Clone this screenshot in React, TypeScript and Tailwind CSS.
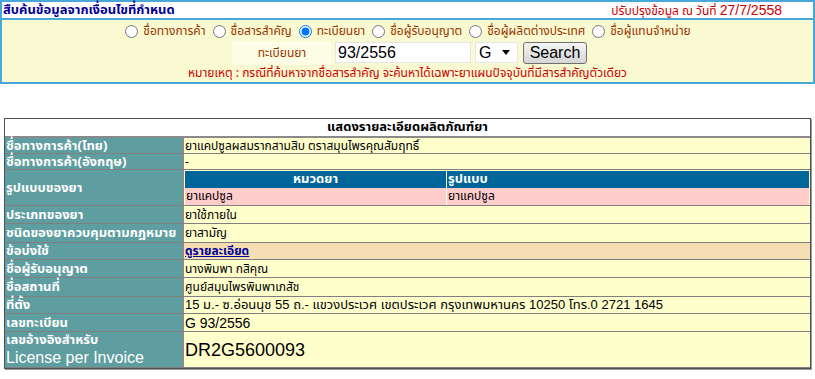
import { useState } from 'react';

// ─── Search options ──────────────────────────────────────────────────────────

const searchTypes = [
  'ชื่อทางการค้า',
  'ชื่อสารสำคัญ',
  'ทะเบียนยา',
  'ชื่อผู้รับอนุญาต',
  'ชื่อผู้ผลิตต่างประเทศ',
  'ชื่อผู้แทนจำหน่าย',
];

const font = "font-['Tahoma','Noto_Sans_Thai','Noto_Sans','Liberation_Sans',sans-serif]";
const latin = "font-['Liberation_Sans','Noto_Sans_Thai',sans-serif]";

// ─── Search panel ────────────────────────────────────────────────────────────

function SearchPanel() {
  const [type, setType] = useState(2);

  return (
    <div className="border-2 border-[#4aa8d8] h-[84px] flex flex-col">
      <div className="flex items-center justify-between h-[18px] bg-white border-b-2 border-[#4aa8d8] pl-[1px] pr-[31px]">
        <span className="text-[13px] font-bold text-[#000099]">สืบค้นข้อมูลจากเงื่อนไขที่กำหนด</span>
        <span className="text-[12px] text-[#cc0000]">
          ปรับปรุงข้อมูล ณ วันที่ <span className={`${latin} text-[14px]`}>27/7/2558</span>
        </span>
      </div>
      <div className="flex-1 bg-[#fafad2] flex flex-col items-center">
        <div className="flex items-center h-[22px] text-[12px] text-[#993300] ml-[8px]">
          {searchTypes.map((label, i) => (
            <label key={label} className="flex items-center gap-[5px] mr-[7px]">
              <input
                type="radio"
                name="type"
                checked={type === i}
                onChange={() => setType(i)}
                className="w-[13px] h-[13px] m-0"
              />
              <span>{label}</span>
            </label>
          ))}
        </div>
        <div className="flex items-center h-[21px] ml-[4px]">
          <div className="w-[100px] h-[24px] bg-[#fdfde6] flex items-center justify-center text-[12px] text-[#993300]">
            ทะเบียนยา
          </div>
          <input
            defaultValue="93/2556"
            className={`${latin} ml-[3px] w-[136px] h-[21px] bg-white border border-[#e6e6e6] px-[2px] text-[16px] text-black outline-none`}
          />
          <div className={`${latin} ml-[4px] w-[43px] h-[21px] bg-white border border-[#e6e6e6] flex items-center justify-between px-[3px] text-[16px]`}>
            <span>G</span>
            <svg width="8" height="5" viewBox="0 0 8 5" className="mr-[4px]"><path d="M0 0h8L4 5z" fill="#000" /></svg>
          </div>
          <button className={`${latin} ml-[5px] w-[64px] h-[22px] rounded-[3px] border border-[#707070] bg-gradient-to-b from-[#f4f4f4] to-[#d6d6d6] text-[16px] text-black leading-none`}>
            Search
          </button>
        </div>
        <div className="h-[19px] flex items-center text-[12px] text-[#cc0000]">
          หมายเหตุ : กรณีที่ค้นหาจากชื่อสารสำคัญ จะค้นหาได้เฉพาะยาแผนปัจจุบันที่มีสารสำคัญตัวเดียว
        </div>
      </div>
    </div>
  );
}

// ─── Detail rows ─────────────────────────────────────────────────────────────

function Row({
  label,
  h,
  children,
  valueClass,
}: {
  label: React.ReactNode;
  h: string;
  children?: React.ReactNode;
  valueClass?: string;
}) {
  return (
    <div className={`flex ${h} border-b border-[#7f7f7f]`}>
      <div className="w-[177px] shrink-0 bg-[#5f9ea0] text-white font-bold text-[13px] leading-[14px] px-[1px] flex flex-col justify-center">
        {label}
      </div>
      <div className="w-[2px] bg-[#8a8a8a]" />
      <div className={`flex-1 ${valueClass ?? 'bg-[#ffffcc] text-[12px]'} leading-[14px] text-black px-[1px] flex items-center`}>
        {children}
      </div>
    </div>
  );
}

function DetailTable() {
  return (
    <div className="ml-[4px] w-[807px] border border-[#505050] shadow-[1px_1px_0_#9a9a9a]">
      <div className="h-[19px] bg-white flex items-center justify-center font-bold text-[13px] border-b-2 border-[#8a8a8a]">
        แสดงรายละเอียดผลิตภัณฑ์ยา
      </div>
      <Row h="h-[16px]" label="ชื่อทางการค้า(ไทย)">ยาแคปซูลผสมรากสามสิบ ตราสมุนไพรคุณสัมฤทธิ์</Row>
      <Row h="h-[16px]" label="ชื่อทางการค้า(อังกฤษ)">-</Row>
      <Row h="h-[36px]" label="รูปแบบของยา" valueClass="bg-[#ffffcc]">
        <div className="w-full flex flex-col">
          <div className="flex h-[17px] bg-[#006699] text-white font-bold text-[13px] items-center">
            <div className="w-[262px] text-center border-r border-white h-full flex items-center justify-center">หมวดยา</div>
            <div className="px-[1px]">รูปแบบ</div>
          </div>
          <div className="flex h-[17px] bg-[#ffcccc] text-[12px] items-center">
            <div className="w-[262px] px-[1px] border-r border-white h-full flex items-center">ยาแคปซูล</div>
            <div className="px-[1px]">ยาแคปซูล</div>
          </div>
        </div>
      </Row>
      <Row h="h-[18px]" label="ประเภทของยา">ยาใช้ภายใน</Row>
      <Row h="h-[19px]" label="ชนิดของยาควบคุมตามกฎหมาย">ยาสามัญ</Row>
      <Row h="h-[17px]" label="ข้อบ่งใช้" valueClass="bg-[#f5deb3] text-[12px]">
        <a href="#" className="text-[#000099] font-bold underline">ดูรายละเอียด</a>
      </Row>
      <Row h="h-[18px]" label="ชื่อผู้รับอนุญาต">นางพิมพา กสิคุณ</Row>
      <Row h="h-[19px]" label="ชื่อสถานที่">ศูนย์สมุนไพรพิมพาเภสัช</Row>
      <Row h="h-[17px]" label="ที่ตั้ง" valueClass={`bg-[#ffffcc] text-[13px] ${latin}`}>
        15 ม.- ซ.อ่อนนุช 55 ถ.- แขวงประเวศ เขตประเวศ กรุงเทพมหานคร 10250 โทร.0 2721 1645
      </Row>
      <Row h="h-[18px]" label="เลขทะเบียน" valueClass={`bg-[#ffffcc] text-[14px] ${latin}`}>G 93/2556</Row>
      <Row
        h="h-[36px]"
        label={
          <>
            <div className="leading-[15px]">เลขอ้างอิงสำหรับ</div>
            <div className={`${latin} font-normal text-[16px] leading-[19px]`}>License per Invoice</div>
          </>
        }
        valueClass={`bg-[#ffffcc] text-[18px] ${latin}`}
      >
        DR2G5600093
      </Row>
    </div>
  );
}

// ─── Page ────────────────────────────────────────────────────────────────────

export default function App() {
  return (
    <div className={`w-[815px] h-[379px] bg-white ${font} leading-none`}>
      <SearchPanel />
      <div className="h-[34px]" />
      <DetailTable />
    </div>
  );
}
